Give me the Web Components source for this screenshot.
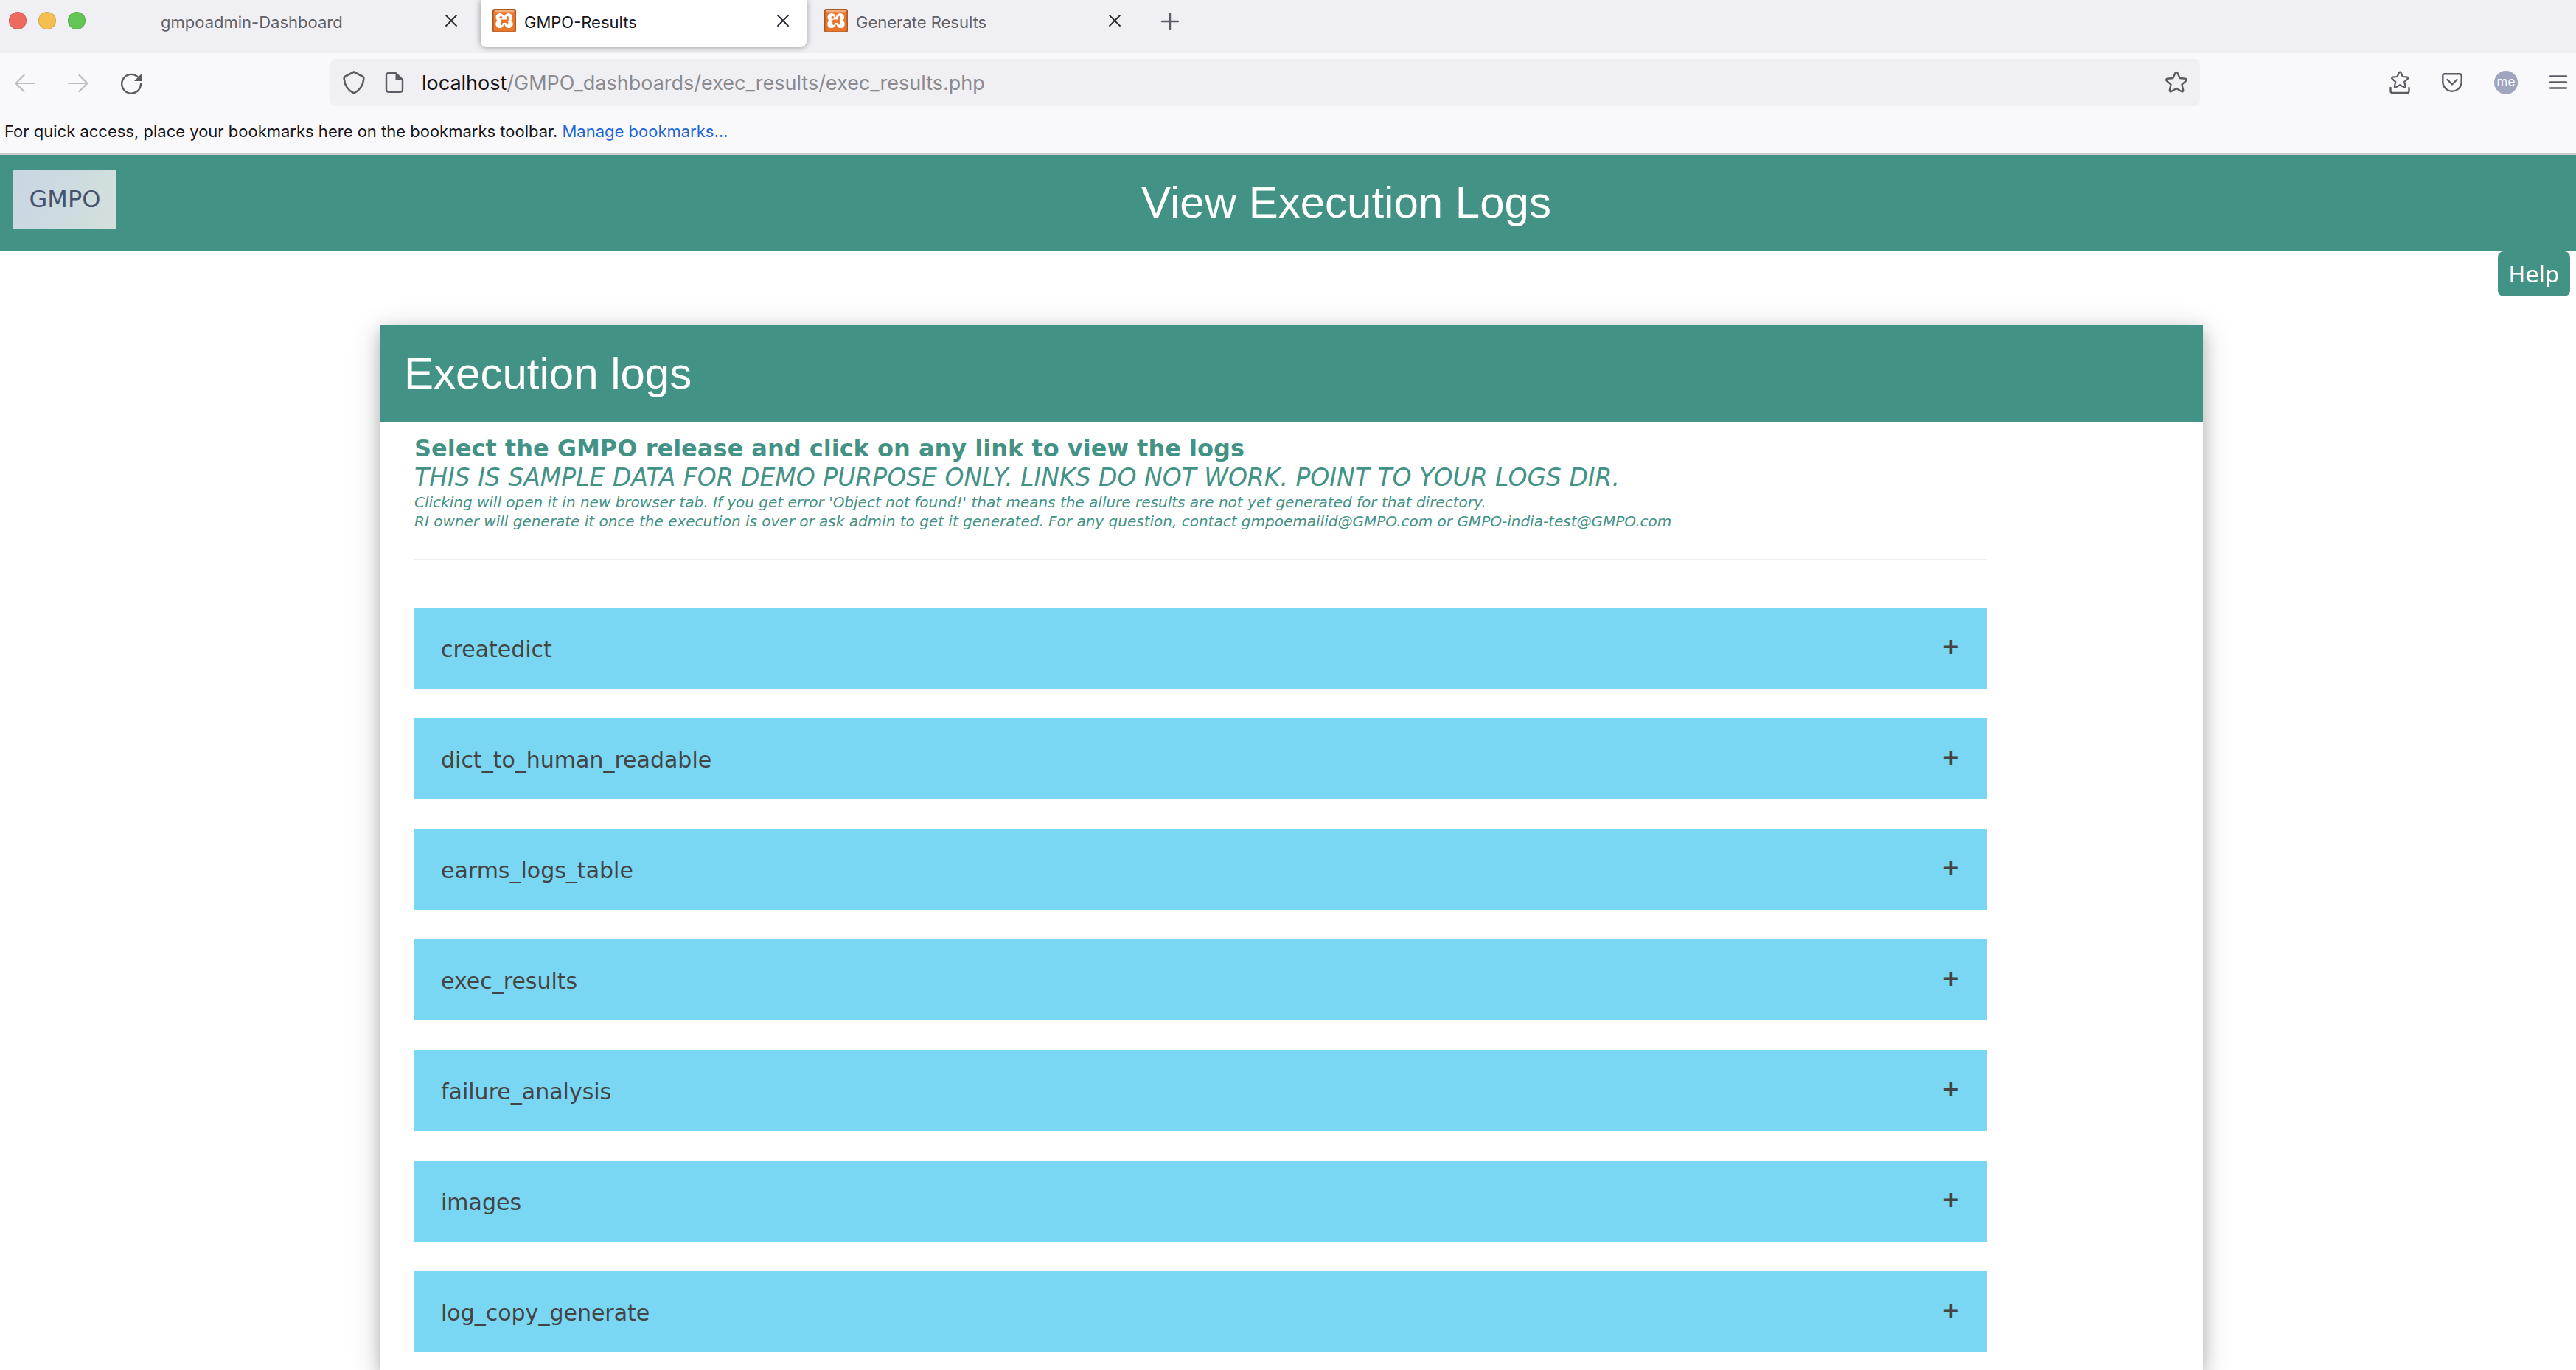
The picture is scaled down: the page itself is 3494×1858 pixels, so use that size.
<!DOCTYPE html>
<html lang="en">
<head>
<meta charset="utf-8">
<title>GMPO-Results</title>
<style>
html, body { margin: 0; background: #fff; }
body { font-family: "DejaVu Sans", Verdana, sans-serif; }
</style>
</head>
<body>
<browser-tabs>
  <browser-tab>gmpoadmin-Dashboard</browser-tab>
  <browser-tab active icon>GMPO-Results</browser-tab>
  <browser-tab icon>Generate Results</browser-tab>
</browser-tabs>
<browser-toolbar host="localhost" path="/GMPO_dashboards/exec_results/exec_results.php"></browser-toolbar>
<bookmarks-bar></bookmarks-bar>
<page-banner>View Execution Logs</page-banner>
<help-row></help-row>
<logs-card heading="Execution logs">
  <logs-intro></logs-intro>
  <log-row>createdict</log-row>
  <log-row>dict_to_human_readable</log-row>
  <log-row>earms_logs_table</log-row>
  <log-row>exec_results</log-row>
  <log-row>failure_analysis</log-row>
  <log-row>images</log-row>
  <log-row>log_copy_generate</log-row>
</logs-card>
<script>
const RESET = `:host,*{box-sizing:border-box}button{font:inherit;color:inherit;background:none;border:0;padding:0;margin:0;display:flex;align-items:center;justify-content:center}svg{display:block;flex:none}a{text-decoration:none}h1,h2,p{margin:0;font-weight:400}`;
const UI = `Inter,"Liberation Sans",sans-serif`;
function define(name, render) {
  customElements.define(name, class extends HTMLElement {
    constructor() {
      super();
      this.attachShadow({ mode: 'open' });
    }
    connectedCallback() {
      this.shadowRoot.innerHTML = render(this);
    }
  });
}
const line = 'fill="none" stroke="currentColor" stroke-linecap="round" stroke-linejoin="round"';
const favicon = `<svg width="32" height="32" viewBox="0 0 32 32"><rect x=".75" y=".75" width="30.500" height="30.500" rx="2" fill="#e8772e" stroke="#a85a22" stroke-width="1.500"/><rect x="3" y="1.800" width="26" height="2.500" rx="1" fill="#f3b083"/><g fill="#fff"><circle cx="10" cy="11.500" r="5.500"/><circle cx="21.500" cy="11.500" r="5.500"/><circle cx="9.800" cy="20.500" r="5.500"/><circle cx="22.200" cy="20.500" r="5.500"/><path d="M7 11h18v10.500H7z"/></g><circle cx="11.300" cy="11.800" r="1.900" fill="#e8772e"/><path d="M20.500 11.500V16H12.500v4.500M12.500 17.500H20v2.500" fill="none" stroke="#e8772e" stroke-width="2.800" stroke-linecap="round" stroke-linejoin="round"/></svg>`;

define('browser-tabs', () => `<style>${RESET}
:host{display:block;background:#f0eff4;font-family:${UI};font-size:22px}
nav{display:flex;height:72px;padding-left:12px}
.lights{display:flex;gap:16px;width:190px;padding-top:16px}
.lights button{width:24px;height:24px;border-radius:50%;border:1px solid #0002}
.tabs{display:flex;gap:8px}
.add{width:50px;height:58px;margin-left:18px;color:#5b5b66}
</style><nav><div class="lights"><button aria-label="Close window" style="background:#ed6a5e"></button><button aria-label="Minimise" style="background:#f5bf4f"></button><button aria-label="Zoom" style="background:#62c554"></button></div>
<div class="tabs"><slot></slot></div>
<button class="add" aria-label="New tab"><svg width="24" height="24" viewBox="0 0 24 24"><path d="M12 1v22M1 12h22" ${line} stroke-width="2.400"/></svg></button></nav>`);

define('browser-tab', el => `<style>${RESET}
:host{display:flex;align-items:flex-start;width:442px;height:64px;padding:12px 24px 0 16px;color:#5f5f66;border-radius:0 0 8px 8px}
:host([active]){background:#fff;color:#15141a;box-shadow:0 0 8px #0006}
.title{flex:1;line-height:36px;padding-left:${el.hasAttribute('icon') ? 11 : 0}px;white-space:nowrap}
button{width:16px;height:32px;color:#2b2a33}
</style>${el.hasAttribute('icon') ? favicon : ''}<span class="title"><slot></slot></span><button aria-label="Close tab"><svg width="16" height="16" viewBox="0 0 16 16"><path d="M1 1l14 14M15 1L1 15" ${line} stroke-width="1.800"/></svg></button>`);

const star = 'M16 2c.8 0 1.300.5 1.600 1.200l3 6.800 7.600.8c1.700.2 2.200 1.700 1 2.900l-5.700 5 1.700 7.600c.3 1.600-.9 2.500-2.300 1.700L16 24l-6.900 4c-1.400.8-2.600-.1-2.300-1.700l1.700-7.600-5.700-5c-1.200-1.200-.7-2.700 1-2.900l7.600-.8 3-6.800C14.700 2.500 15.200 2 16 2z';
define('browser-toolbar', el => `<style>${RESET}
:host{display:flex;align-items:center;height:80px;padding:0 12px 0 20px;background:#f9f9fb;color:#5b5b66;font-family:${UI}}
.nav{display:flex;align-items:center;gap:44px;width:428px}
.off{color:#bdbdc2}
.url{display:flex;align-items:center;flex:1;height:64px;padding:0 16px;background:#f0eff4;border-radius:8px;font-size:27px;color:#8a8a8f}
.url span{flex:1;padding-left:24px;white-space:nowrap;line-height:34px;padding-top:2px}
.url b{font-weight:400;color:#15141a}
.url .doc{margin-left:26px}
.tools{display:flex;align-items:center;width:498px;justify-content:flex-end;gap:43px}
.url svg{color:#5b5b66}
.me{width:32px;height:32px;border-radius:50%;background:#9fa4bf;color:#fff;font-size:17px;line-height:28px;padding-bottom:3px}
</style>
<div class="nav">
<button class="off" aria-label="Back"><svg width="28" height="28" viewBox="0 0 28 28"><path d="M27 15H1M12.500 4L1.500 15l11 11" ${line} stroke-width="2.200"/></svg></button>
<button class="off" aria-label="Forward"><svg width="28" height="28" viewBox="0 0 28 28"><path d="M1 15h26M15.500 4l11 11-11 11" ${line} stroke-width="2.200"/></svg></button>
<button aria-label="Reload"><svg width="30" height="32" viewBox="0 0 30 32"><path d="M27 18A12.900 12.900 0 1 1 22.500 8" ${line} stroke-width="2.400"/><path d="M28 4v10h-10z" fill="currentColor"/></svg></button></div>
<div class="url"><svg width="32" height="32" viewBox="0 0 32 32"><path d="M16 1.500L27.500 7.500q2 1 1.800 3.500C28.500 20 23 27 16 30.500 9 27 3.500 20 2.700 11q-.2-2.500 1.800-3.500z" ${line} stroke-width="2.600"/></svg>
<svg class="doc" width="26" height="28" viewBox="0 0 26 28"><path d="M15 1.300H5Q2 1.300 2 4.500v19q0 3.200 3 3.200h16q3 0 3-3.200V10z" ${line} stroke-width="2.400"/><path d="M15 1v9h9z" fill="currentColor" stroke="currentColor"/></svg>
<span><b>${el.getAttribute('host')}</b>${el.getAttribute('path')}</span>
<button aria-label="Bookmark this page"><svg width="32" height="32" viewBox="0 0 32 32"><path d="${star}" ${line} stroke-width="2.400"/></svg></button></div>
<div class="tools">
<button aria-label="Bookmarks"><svg width="28" height="32" viewBox="0 0 28 32"><path transform="translate(1.400 0) scale(.8)" d="${star}" ${line} stroke-width="2.800"/><path d="M1.500 23v4.500q0 2.500 2.500 2.500h20q2.500 0 2.500-2.500V23" ${line} stroke-width="2.400"/></svg></button>
<button aria-label="Save to Pocket"><svg width="28" height="26" viewBox="0 0 28 26"><path d="M4 1.300h20q2.700 0 2.700 2.700v8a12.700 12.700 0 0 1-25.400 0V4Q1.300 1.300 4 1.300zM7.500 9l6.500 6.500L20.500 9" ${line} stroke-width="2.400"/></svg></button>
<button class="me" aria-label="Account">me</button>
<button aria-label="Menu"><svg width="24" height="22" viewBox="0 0 24 22"><path d="M1 2.500h22M1 10.500h22M1 18.500h22" ${line} stroke-width="2.400"/></svg></button></div>`);

define('bookmarks-bar', () => `<style>${RESET}
:host{display:block;height:58px;padding:10px 6px;background:#f9f9fb;border-bottom:2px solid #ccccce;color:#15141a;font:22px/32px ${UI}}
a{color:#1d66d8}
</style><p>For quick access, place your bookmarks here on the bookmarks toolbar. <a href="#">Manage bookmarks…</a></p>`);

define('page-banner', () => `<style>${RESET}
:host{display:flex;height:131px;padding:20px 0 0 18px;background:#429285;color:#fff}
.logo{display:flex;align-items:center;justify-content:center;width:140px;height:80px;background:linear-gradient(110deg,#cad5e3,#cddbe0 50%,#d5e0dd);color:#44546c;font-size:32px}
h1{flex:1;text-align:center;font:60px/90px "Liberation Sans",Arial,sans-serif}
</style><div class="logo">GMPO</div><h1><slot></slot></h1>`);

define('help-row', () => `<style>${RESET}
:host{display:flex;justify-content:flex-end;align-items:flex-start;height:100px;padding-right:8px}
button{height:61px;padding:2px 15px 0;border-radius:8px;background:#429285;color:#fff;font-size:30px}
</style><button>Help</button>`);

define('logs-card', el => `<style>${RESET}
:host{display:block;margin:0 506px 0 516px;background:#fff;box-shadow:0 8px 20px #0003,0 8px 40px #00000030;clip-path:inset(-80px -80px 0)}
h2{height:131px;padding-left:32px;background:#429285;color:#fff;font:60px/131px "Liberation Sans",Arial,sans-serif}
.body{display:flex;flex-direction:column;gap:40px;padding:16px 293px 24px 46px}
</style><h2>${el.getAttribute('heading')}</h2><div class="body"><slot></slot></div>`);

define('logs-intro', () => `<style>${RESET}
:host{display:block;color:#429285;border-bottom:2px solid #eee;margin-bottom:24px;height:172px;white-space:nowrap}
p{font-size:32px;line-height:40px}
.demo,.note{font-style:italic}
.lead{font-weight:700}.demo{font-size:33px}
.note{font-size:20px;line-height:26px}
</style><p class="lead">Select the GMPO release and click on any link to view the logs</p><p class="demo">THIS IS SAMPLE DATA FOR DEMO PURPOSE ONLY. LINKS DO NOT WORK. POINT TO YOUR LOGS DIR.</p><p class="note">Clicking will open it in new browser tab. If you get error 'Object not found!' that means the allure results are not yet generated for that directory.<br>RI owner will generate it once the execution is over or ask admin to get it generated. For any question, contact gmpoemailid@GMPO.com or GMPO-india-test@GMPO.com</p>`);

define('log-row', () => `<style>${RESET}
:host{display:block}
button{width:100%;height:110px;padding:2px 36px 0;justify-content:space-between;background:#79d7f3;color:#444;font-size:30px}
.plus{font-weight:700;padding-bottom:8px}
</style><button aria-expanded="false"><slot></slot><span class="plus">+</span></button>`);
</script>
</body>
</html>
